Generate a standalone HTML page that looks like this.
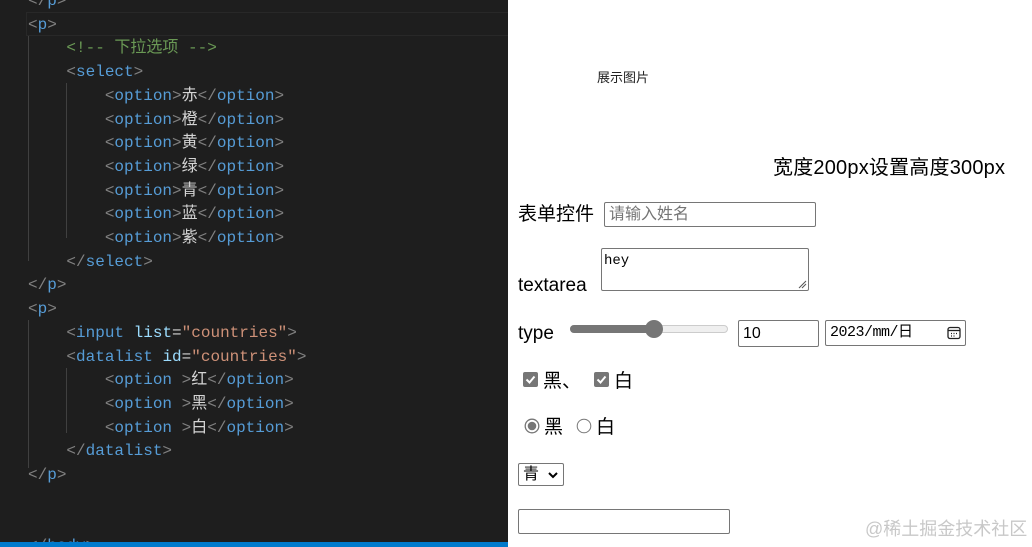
<!DOCTYPE html><html><head><meta charset="utf-8"><style>
body{margin:0;width:1032px;height:547px;overflow:hidden;position:relative;background:#fff;font-family:"Liberation Sans","Noto Sans CJK SC",sans-serif}
#ed{position:absolute;left:0;top:0;width:508px;height:547px;background:#1e1e1e;overflow:hidden}
#code{position:absolute;left:28px;top:-10px;font:16px/23.7px "Liberation Mono","Noto Sans CJK SC",monospace;color:#d4d4d4;white-space:pre}
.b{color:#808080}.t{color:#569cd6}.a{color:#9cdcfe}.s{color:#ce9178}.c{color:#6a9955}
.hl{position:absolute;left:26px;top:12px;width:490px;height:22px;border:1px solid #282828}
.g{position:absolute;width:1px;background:#404040}
#bar{position:absolute;left:0;top:542px;width:508px;height:5px;background:#007acc}
.ab{position:absolute;white-space:nowrap;color:#000;line-height:22px}
.inp{position:absolute;border:1px solid #767676;border-radius:2px;background:#fff;box-sizing:border-box}
</style></head><body>
<div id="ed">
<div class="hl"></div>
<div class="g" style="left:28px;top:36px;height:225px"></div>
<div class="g" style="left:66px;top:83px;height:155px"></div>
<div class="g" style="left:28px;top:320px;height:148px"></div>
<div class="g" style="left:66px;top:368px;height:65px"></div>
<div id="code"><span class="b">&lt;/</span><span class="t">p</span><span class="b">&gt;</span>
<span class="b">&lt;</span><span class="t">p</span><span class="b">&gt;</span>
    <span class="c">&lt;!-- 下拉选项 --&gt;</span>
    <span class="b">&lt;</span><span class="t">select</span><span class="b">&gt;</span>
        <span class="b">&lt;</span><span class="t">option</span><span class="b">&gt;</span>赤<span class="b">&lt;/</span><span class="t">option</span><span class="b">&gt;</span>
        <span class="b">&lt;</span><span class="t">option</span><span class="b">&gt;</span>橙<span class="b">&lt;/</span><span class="t">option</span><span class="b">&gt;</span>
        <span class="b">&lt;</span><span class="t">option</span><span class="b">&gt;</span>黄<span class="b">&lt;/</span><span class="t">option</span><span class="b">&gt;</span>
        <span class="b">&lt;</span><span class="t">option</span><span class="b">&gt;</span>绿<span class="b">&lt;/</span><span class="t">option</span><span class="b">&gt;</span>
        <span class="b">&lt;</span><span class="t">option</span><span class="b">&gt;</span>青<span class="b">&lt;/</span><span class="t">option</span><span class="b">&gt;</span>
        <span class="b">&lt;</span><span class="t">option</span><span class="b">&gt;</span>蓝<span class="b">&lt;/</span><span class="t">option</span><span class="b">&gt;</span>
        <span class="b">&lt;</span><span class="t">option</span><span class="b">&gt;</span>紫<span class="b">&lt;/</span><span class="t">option</span><span class="b">&gt;</span>
    <span class="b">&lt;/</span><span class="t">select</span><span class="b">&gt;</span>
<span class="b">&lt;/</span><span class="t">p</span><span class="b">&gt;</span>
<span class="b">&lt;</span><span class="t">p</span><span class="b">&gt;</span>
    <span class="b">&lt;</span><span class="t">input</span> <span class="a">list</span>=<span class="s">"countries"</span><span class="b">&gt;</span>
    <span class="b">&lt;</span><span class="t">datalist</span> <span class="a">id</span>=<span class="s">"countries"</span><span class="b">&gt;</span>
        <span class="b">&lt;</span><span class="t">option</span> <span class="b">&gt;</span>红<span class="b">&lt;/</span><span class="t">option</span><span class="b">&gt;</span>
        <span class="b">&lt;</span><span class="t">option</span> <span class="b">&gt;</span>黑<span class="b">&lt;/</span><span class="t">option</span><span class="b">&gt;</span>
        <span class="b">&lt;</span><span class="t">option</span> <span class="b">&gt;</span>白<span class="b">&lt;/</span><span class="t">option</span><span class="b">&gt;</span>
    <span class="b">&lt;/</span><span class="t">datalist</span><span class="b">&gt;</span>
<span class="b">&lt;/</span><span class="t">p</span><span class="b">&gt;</span>


<span class="b">&lt;/</span><span class="t">body</span><span class="b">&gt;</span></div>
<div id="bar"></div>
</div>

<div class="ab" style="left:597px;top:67px;font-size:13px;color:#222">展示图片</div>
<div class="ab" style="left:773px;top:157px;font-size:20px;letter-spacing:0.2px">宽度200px设置高度300px</div>

<div class="ab" style="left:518px;top:204px;font-size:19px">表单控件</div>
<div class="inp" style="left:604px;top:202px;width:212px;height:25px;font-size:16px;line-height:19px;color:#757575;padding:2px 4px">请输入姓名</div>

<div class="ab" style="left:518px;top:275px;font-size:19px">textarea</div>
<div class="inp" style="left:601px;top:248px;width:208px;height:43px;font:14px/16px 'Liberation Mono',monospace;padding:4px 2px">hey
<svg style="position:absolute;right:1px;bottom:1px" width="9" height="9"><path d="M1 8L8 1M4 8L8 4" stroke="#555" stroke-width="1"/></svg></div>

<div class="ab" style="left:518px;top:323px;font-size:19px">type</div>
<div style="position:absolute;left:570px;top:325px;width:158px;height:8px;border-radius:4px;background:#efefef;border:1px solid #ccc;box-sizing:border-box"></div>
<div style="position:absolute;left:570px;top:325px;width:84px;height:8px;border-radius:4px;background:#767676"></div>
<div style="position:absolute;left:645px;top:320px;width:18px;height:18px;border-radius:50%;background:#767676"></div>
<div class="inp" style="left:738px;top:320px;width:81px;height:27px;font-size:16px;line-height:20px;padding:3px 4px">10</div>
<div class="inp" style="left:825px;top:320px;width:141px;height:26px;font:15px/19px 'Liberation Mono','Noto Sans CJK SC',monospace;padding:2px 4px;letter-spacing:-0.5px">2023/mm/日
<svg style="position:absolute;right:4px;top:5px" width="14" height="14"><rect x="1" y="1.5" width="12" height="11" rx="2" fill="none" stroke="#222" stroke-width="1.3"/><path d="M1 4.5H13" stroke="#222" stroke-width="1.3"/><path d="M4 7.5h1M6.5 7.5h1M9 7.5h1M4 10h1M6.5 10h1" stroke="#222" stroke-width="1.3"/></svg></div>

<svg style="position:absolute;left:523px;top:372px" width="15" height="15"><rect width="15" height="15" rx="2" fill="#767676"/><path d="M3.5 7.5l3 3 5-6" stroke="#fff" stroke-width="2" fill="none"/></svg>
<div class="ab" style="left:543px;top:371px;font-size:19px">黑、</div>
<svg style="position:absolute;left:594px;top:372px" width="15" height="15"><rect width="15" height="15" rx="2" fill="#767676"/><path d="M3.5 7.5l3 3 5-6" stroke="#fff" stroke-width="2" fill="none"/></svg>
<div class="ab" style="left:614px;top:371px;font-size:19px">白</div>

<svg style="position:absolute;left:524px;top:418px" width="16" height="16"><circle cx="8" cy="8" r="6.8" fill="#fff" stroke="#767676" stroke-width="1.3"/><circle cx="8" cy="8" r="4.3" fill="#767676"/></svg>
<div class="ab" style="left:544px;top:417px;font-size:19px">黑</div>
<svg style="position:absolute;left:576px;top:418px" width="16" height="16"><circle cx="8" cy="8" r="6.8" fill="#fff" stroke="#767676" stroke-width="1"/></svg>
<div class="ab" style="left:596px;top:417px;font-size:19px">白</div>

<div class="inp" style="left:518px;top:463px;width:46px;height:23px;font-size:16px;line-height:19px;padding:1px 4px">青<svg style="position:absolute;right:5px;top:7px" width="10" height="8"><path d="M1 2l4 4 4-4" stroke="#000" stroke-width="2" fill="none"/></svg></div>

<div class="inp" style="left:518px;top:509px;width:212px;height:25px"></div>
<div class="ab" style="left:865px;top:518px;font-size:18px;color:#c8c8c8">@稀土掘金技术社区</div>
</body></html>
